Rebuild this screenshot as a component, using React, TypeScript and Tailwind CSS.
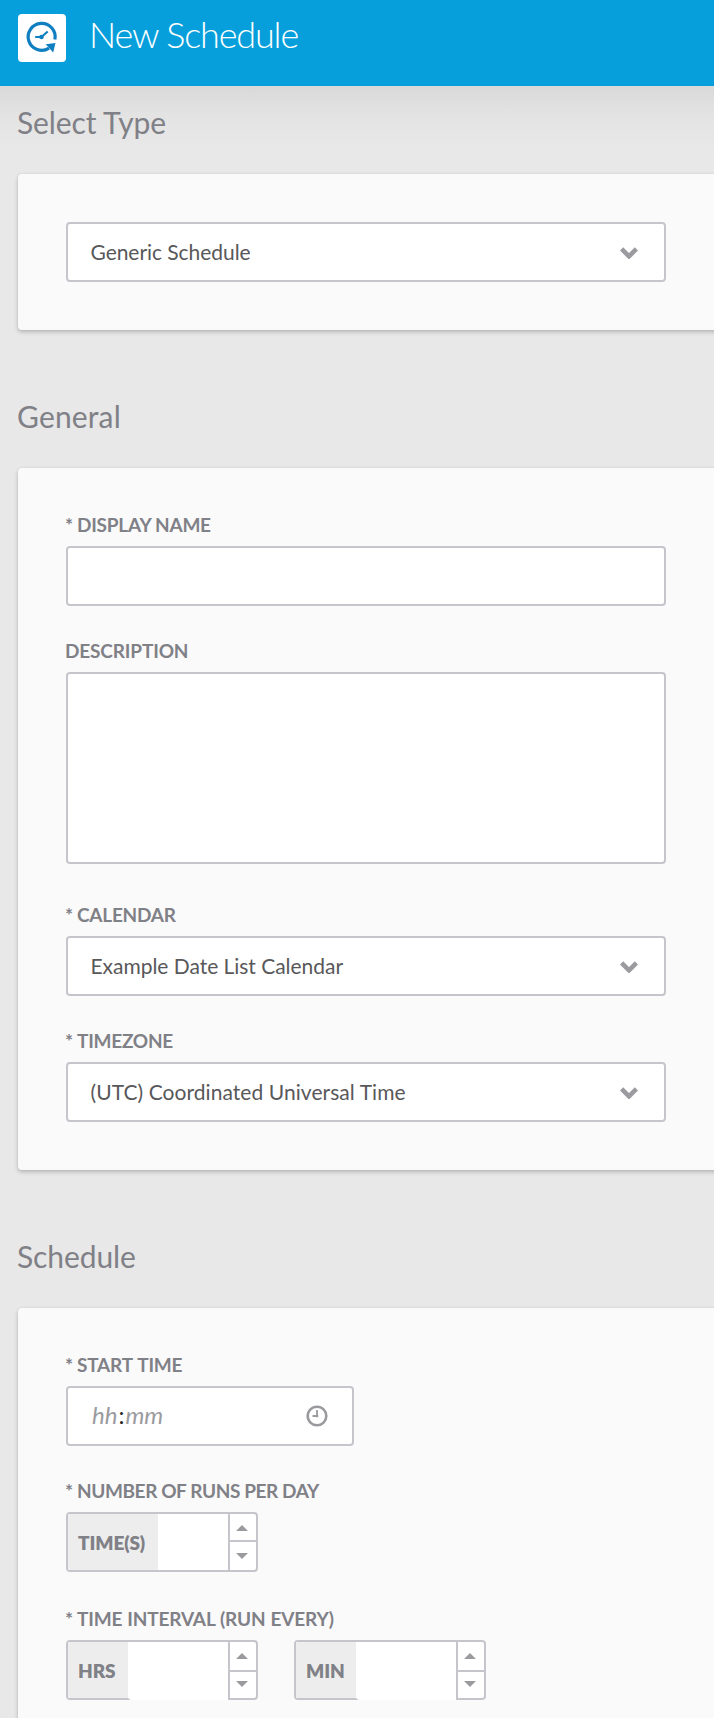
import type { ReactNode } from "react";

function Heading({ tracking = "tracking-[-0.1px]", children }: { tracking?: string; children: ReactNode }) {
  return (
    <h2
      className={`-mt-px -ml-px text-[30px] leading-[36px] whitespace-nowrap text-[#808087] ${tracking}`}
    >
      {children}
    </h2>
  );
}

function Card({ className, children }: { className: string; children: ReactNode }) {
  return (
    <section
      className={`w-[760px] rounded-[4px] bg-[#fafafa] px-12 shadow-[0_2px_4px_rgba(0,0,0,0.22),0_0_2px_rgba(0,0,0,0.07)] ${className}`}
    >
      {children}
    </section>
  );
}

function Label({
  required,
  tracking = "tracking-[-0.25px]",
  children,
}: {
  required?: boolean;
  tracking?: string;
  children: ReactNode;
}) {
  return (
    <div className="mb-3 -ml-px flex h-[18px] text-[19px] leading-[18px] font-bold whitespace-nowrap text-[#808087]">
      {required ? <span className="w-[12px] shrink-0">*</span> : null}
      <span className={tracking}>{children}</span>
    </div>
  );
}

function Select({ value, tracking = "tracking-normal" }: { value: string; tracking?: string }) {
  return (
    <div className="flex h-[60px] w-[600px] items-center justify-between rounded-[4px] border-2 border-[#c5c5cb] bg-white pr-[26px] pl-[22.5px] text-[21px] leading-6 text-[#58585a]">
      <span className={`whitespace-nowrap ${tracking}`}>{value}</span>
      <svg width="18" height="12" viewBox="0 0 18 12" className="mt-[2px]">
        <path d="M1.6 1.9 9 9.3l7.4-7.4" fill="none" stroke="#9b9b9f" strokeWidth="4.6" />
      </svg>
    </div>
  );
}

function Arrow({ down }: { down?: boolean }) {
  return (
    <svg width="12" height="6" viewBox="0 0 12 6">
      <path d={down ? "M0 0h12L6 6z" : "M0 6h12L6 0z"} fill="#9b9b9f" />
    </svg>
  );
}

function Stepper({ unit, open }: { unit: string; open?: boolean }) {
  return (
    <div className="flex h-[60px] w-[192px] rounded-[4px] border-2 border-[#c5c5cb] bg-white">
      <div
        className={`flex items-center bg-[#ededed] pt-0.5 pl-[10px] text-[19px] leading-6 font-extrabold tracking-[-0.1px] whitespace-nowrap text-[#808087] ${
          open ? "w-[60px]" : "w-[90px]"
        }`}
      >
        {unit}
      </div>
      <div className={open ? "-mb-0.5 flex-1 rounded-l-[4px] bg-white" : "flex-1 bg-white"} />
      <div className="flex w-[28px] flex-col border-l-2 border-[#c5c5cb]">
        <div
          className={`flex justify-center border-b-2 border-[#c5c5cb] pt-[11px] pr-0.5 ${
            open ? "h-[30px]" : "h-[28px]"
          }`}
        >
          <Arrow />
        </div>
        <div className={`flex justify-center pr-0.5 ${open ? "pt-[9px]" : "pt-[11px]"}`}>
          <Arrow down />
        </div>
      </div>
    </div>
  );
}

export default function App() {
  return (
    <div className="h-[1718px] w-full overflow-hidden bg-[#e8e8e8] font-['Lato',sans-serif]">
      <header className="flex h-[86px] items-start bg-[#079fdb] pt-[14px] pl-[18px]">
        <div className="flex size-12 items-center justify-center rounded-[4px] bg-white">
          <svg width="48" height="48" viewBox="0 0 48 48" fill="none">
            <path d="M36.9 25.5A13.5 13.5 0 1 0 31 34.2" stroke="#107fc2" strokeWidth="3.2" />
            <path d="M27.8 30.2 37.5 29 35.2 38.4Z" fill="#107fc2" />
            <path d="M17.2 23H23.5L29.7 17.5" stroke="#107fc2" strokeWidth="2.2" />
            <circle cx="23.5" cy="23" r="2.3" fill="#107fc2" />
          </svg>
        </div>
        <h1 className="-mt-px ml-[23px] text-[36px] leading-[42px] font-light tracking-[-1.15px] whitespace-nowrap text-white">
          New Schedule
        </h1>
      </header>
      <main className="h-[1632px] bg-[linear-gradient(to_bottom,#d9d9d9_0px,#e3e3e3_28px,#e8e8e8_62px)] pt-[19px] pl-[18px]">
        <Heading>Select Type</Heading>
        <Card className="mt-[34px] h-[156px] pt-12">
          <Select value="Generic Schedule" tracking="tracking-[-0.05px]" />
        </Card>

        <div className="pt-[69px]">
          <Heading tracking="tracking-[0.15px]">General</Heading>
        </div>
        <Card className="mt-[34px] h-[702px] pt-12">
          <Label required>DISPLAY NAME</Label>
          <div className="mb-9 h-[60px] w-[600px] rounded-[4px] border-2 border-[#c5c5cb] bg-white" />
          <Label tracking="tracking-[-0.15px]">DESCRIPTION</Label>
          <div className="mb-[42px] h-[192px] w-[600px] rounded-[4px] border-2 border-[#c5c5cb] bg-white" />
          <Label required>CALENDAR</Label>
          <Select value="Example Date List Calendar" tracking="tracking-[-0.03px]" />
          <div className="h-9" />
          <Label required>TIMEZONE</Label>
          <Select value="(UTC) Coordinated Universal Time" tracking="tracking-[0.06px]" />
        </Card>

        <div className="pt-[69px]">
          <Heading>Schedule</Heading>
        </div>
        <Card className="mt-[34px] h-[480px] pt-12">
          <Label required tracking="tracking-[-0.2px] [word-spacing:1px]">START TIME</Label>
          <div className="mb-9 flex h-[60px] w-[288px] items-center justify-between rounded-[4px] border-2 border-[#c5c5cb] bg-white pr-6 pl-[24px]">
            <span className="-mt-0.5 flex text-[24px] leading-7 text-[#9b9b9f]">
              <i className="mr-px">hh</i>
              <span className="mr-px text-[#222]">:</span>
              <i>mm</i>
            </span>
            <svg width="22" height="22" viewBox="0 0 22 22" fill="none" stroke="#9b9b9f">
              <circle cx="11" cy="11" r="9.3" strokeWidth="2.6" />
              <path d="M11 5v6H6.5" strokeWidth="1.8" />
              <circle cx="11" cy="11" r="1" />
            </svg>
          </div>
          <Label required tracking="tracking-[-0.4px]">NUMBER OF RUNS PER DAY</Label>
          <Stepper unit="TIME(S)" />
          <div className="h-[38px]" />
          <Label required tracking="tracking-[-0.15px] [word-spacing:0.5px]">TIME INTERVAL (RUN EVERY)</Label>
          <div className="flex gap-9">
            <Stepper unit="HRS" open />
            <Stepper unit="MIN" open />
          </div>
        </Card>
      </main>
    </div>
  );
}
